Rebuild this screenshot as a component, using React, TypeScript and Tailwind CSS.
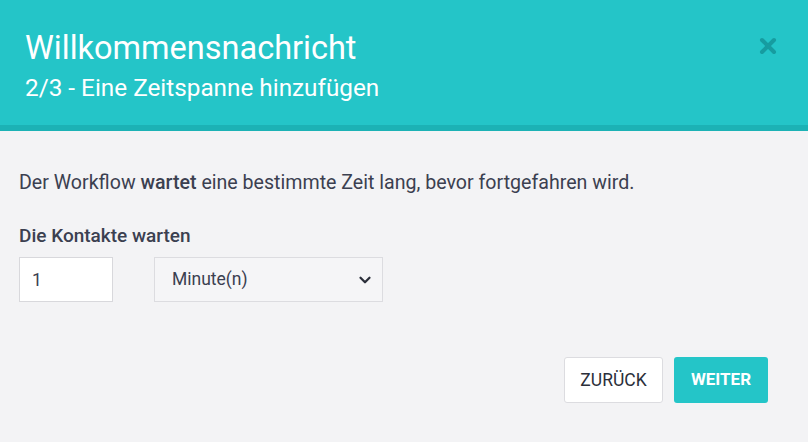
import { X, ChevronDown } from "lucide-react";

export default function App() {
  return (
    <div className="w-[808px] h-[442px] bg-[#f3f3f5] font-['Roboto',sans-serif] flex flex-col">
      <div className="bg-[#24c5c8] h-[131px] shrink-0 border-b-[6px] border-[#1cb2b5] flex items-start justify-between pl-[25px] pr-[28px] pt-[29px]">
        <div className="flex flex-col">
          <h1 className="text-white text-[32.5px] leading-[38px]">Willkommensnachricht</h1>
          <p className="text-white text-[24.3px] leading-[30px] mt-[6px]">2/3 - Eine Zeitspanne hinzufügen</p>
        </div>
        <button className="text-[#169ca0] mt-[5px]">
          <X size={24} strokeWidth={4} />
        </button>
      </div>
      <div className="flex flex-col px-[19px] pt-[38px]">
        <p className="text-[#3b4050] text-[19.6px] leading-[28px]">
          Der Workflow <span className="font-medium">wartet</span> eine bestimmte Zeit lang, bevor fortgefahren wird.
        </p>
        <label className="text-[#3b4050] text-[19px] leading-[28px] font-medium mt-[25px]">Die Kontakte warten</label>
        <div className="flex gap-[41px] mt-[7px]">
          <input
            defaultValue="1"
            className="w-[94px] h-[45px] bg-white border border-[#d8d8dc] px-[12px] text-[17.5px] text-[#3b4050] outline-none"
          />
          <div className="w-[229px] h-[45px] bg-[#f5f5f7] border border-[#dcdce0] flex items-center justify-between pl-[17px] pr-[8px] text-[17.5px] text-[#3b4050]">
            <span>Minute(n)</span>
            <ChevronDown size={18} strokeWidth={3} className="text-[#2b2f3a]" />
          </div>
        </div>
        <div className="flex justify-end gap-[11px] mt-[55px] pr-[21px]">
          <button className="w-[99px] h-[46px] bg-white border border-[#dcdce0] rounded-[3px] text-[#2b2f3a] text-[17.5px]">ZURÜCK</button>
          <button className="w-[94px] h-[46px] bg-[#24c5c8] rounded-[3px] text-white text-[17px] font-bold">WEITER</button>
        </div>
      </div>
    </div>
  );
}
